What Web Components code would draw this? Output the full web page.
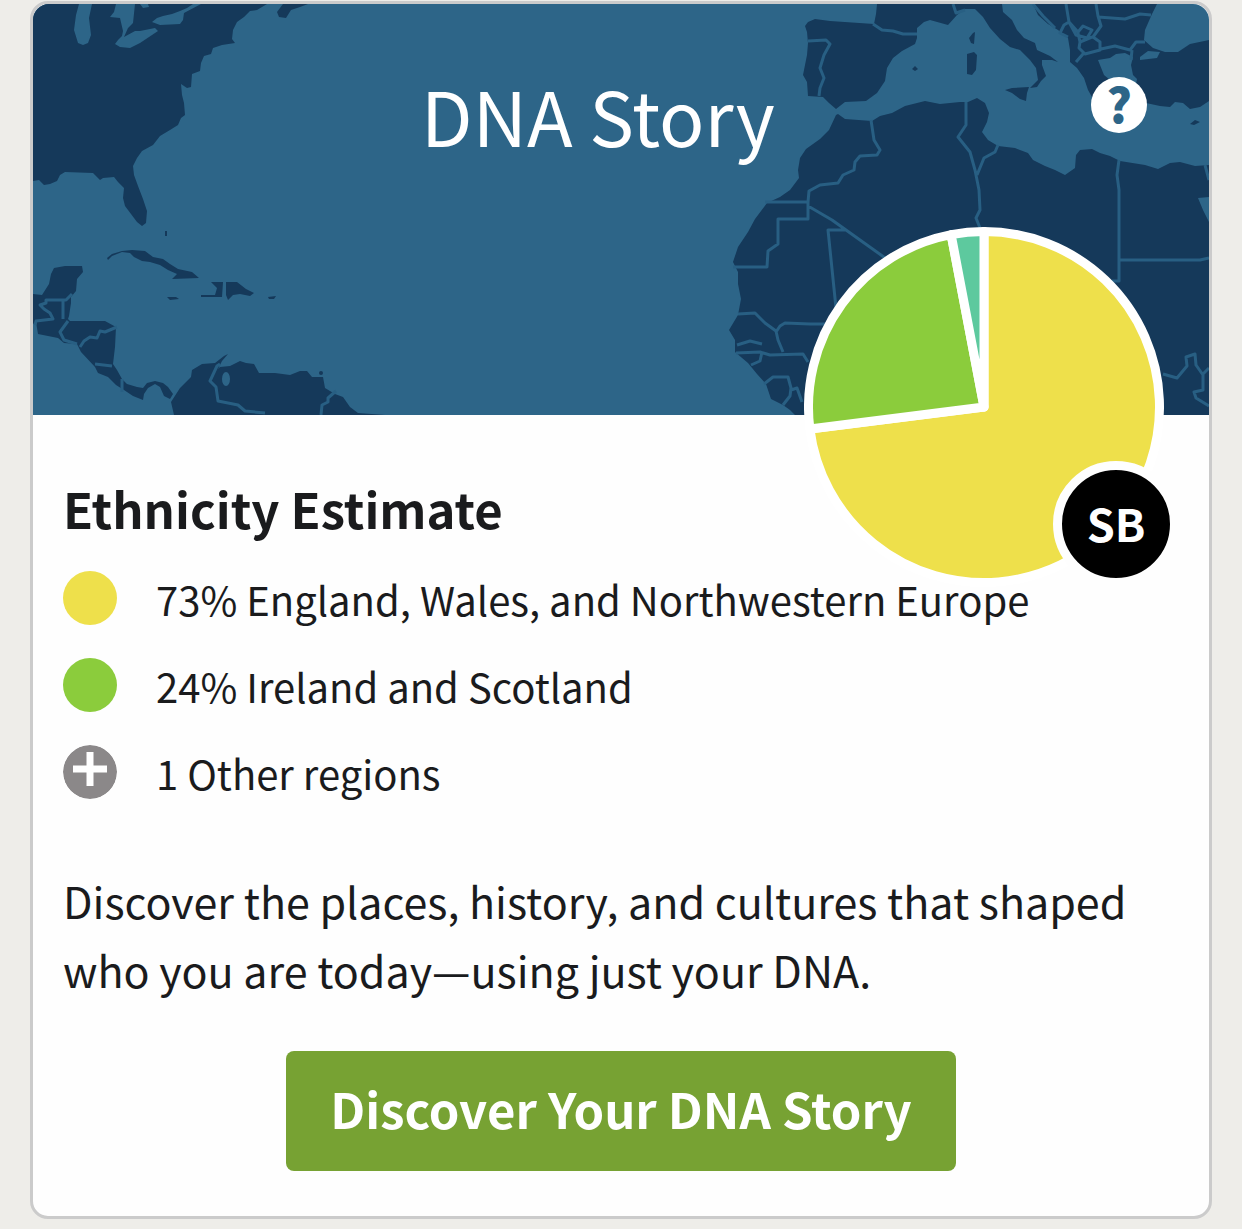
<!DOCTYPE html>
<html lang="en">
<head>
<meta charset="utf-8">
<meta name="viewport" content="width=device-width, initial-scale=1">
<title>DNA Story</title>
<style>
  body {
    margin: 0;
    padding: 1px 30px 10px;
    background: #eeede9;
    color: #1a1b1d;
    font-family: "Noto Sans CJK SC", "Noto Sans CJK JP", "Noto Sans", sans-serif;
  }
</style>
</head>
<body>
<dna-card>
  <dna-hero slot="hero">
    <span slot="title">DNA Story</span>
    <dna-pie slot="chart" values="73,24,3" colors="#eee04b,#8bcc3c,#5dc99e">SB</dna-pie>
  </dna-hero>
  <span slot="heading">Ethnicity Estimate</span>
  <dna-region color="#eee04b">73% England, Wales, and Northwestern Europe</dna-region>
  <dna-region color="#8bcc3c">24% Ireland and Scotland</dna-region>
  <dna-region color="#8b8889" more>1 Other regions</dna-region>
  <span slot="text">Discover the places, history, and cultures that shaped who you are today—using just your DNA.</span>
  <dna-button slot="action">Discover Your DNA Story</dna-button>
</dna-card>

<template id="map-template">
  <style>
    :host { display: block; overflow: hidden; background: #2d6588; }
    svg { display: block; width: 100%; height: 100%; }
    .land { fill: #15395a; }
    .water { fill: #2d6588; }
    .border { fill: none; stroke: #285f83; stroke-width: 3; stroke-linejoin: round; }
  </style>
  <svg viewBox="33 4 1176 411" preserveAspectRatio="xMidYMid slice" aria-hidden="true">
    <!-- north america -->
    <path class="land" d="M33 4H267L257 10 250 11 244 17 237 22 233 30 232 39 235 43 222 45 213 48 211 54 204 56 201 63 200 71 192 74 191 87 187 88 181 84 182 95 184 103 185 115 181 118 178 125 170 130 160 136 153 145 142 151 137 158 133 166 134 175 138 186 143 199 147 211 146 223 142 226 137 222 131 214 125 206 123 198 124 188 118 182 114 177 103 178 100 180 93 173 65 172 60 175 57 181 50 184 44 185 39 180 33 181Z"/>
    <path class="land" d="M283 4 277 12 279 17 286 18 291 10 300 7 308 4Z"/>
    <path class="water" d="M79 4 76 15 74 30 78 43 83 45 88 43 91 35 89 18 92 4Z
      M116 4 114 12 110 17 120 18 123 31 122 36 118 40 115 44 120 47 130 48 140 43 158 31 155 28 140 31 135 31 124 37 128 28 133 23 135 4Z
      M152 22 157 18 163 16 172 14 180 11 187 8 193 4H201L184 13 183 20 180 24 160 25Z
      M140 4 143 8 149 7 148 4Z"/>
    <!-- caribbean -->
    <path class="land" d="M107 258 112 254 122 251 132 250 145 251 153 257 163 259 170 264 178 269 192 272 199 278 172 279 177 274 168 270 160 265 150 262 142 261 134 257 130 253 122 252 112 256 108 260Z
      M167 297H176L179 299 170 300Z
      M211 282H223L222 297H201V295H215L217 288Z
      M226 282H237L246 289 254 293 250 296 240 294 233 295 228 300 226 295Z
      M268 297 276 296 274 299 269 299Z
      M165 231H167V236H165Z"/>
    <!-- central america -->
    <path class="land" d="M33 294 42 295 49 284 51 274 54 268 65 266H82L83 272 77 279 76 291 71 297 71 303 69 316 68 319 70 321H105L116 327 115 347 113 364 117 370 122 379 127 384 137 387 143 388 147 383 155 381 163 383 168 387 173 394 170 399 164 396 160 387 155 384 148 388 144 394 143 400 133 396 124 390 116 385 108 377 98 373 95 367 81 352 77 344 64 343 58 338 38 334 36 322 33 324Z"/>
    <path class="border" d="M35 325 36 321 53 319 50 313 44 309 40 305 46 303V300H66L72 294
      M63 301V319 M68 321 60 332 64 340 77 344 M80 347 84 341 90 337 97 338 100 331 105 332 117 327
      M95 364 112 366 M122 379V392"/>
    <!-- south america -->
    <path class="land" d="M174 415 171 402 180 388 191 377 192 370 202 364 215 363 224 356 228 354 222 361 218 369 220 367 230 366 240 361 246 363 254 364 259 373H275L290 375 300 371H307L312 377 323 377 325 388 335 394 343 397 350 407 358 413 385 415Z"/>
    <ellipse class="water" cx="226" cy="379" rx="4" ry="7"/>
    <path class="border" d="M220 364 217 366 210 381 216 387 218 401 238 405 245 411 265 413 M336 391 328 398V402L322 405 321 415"/>
    <circle class="land" cx="321" cy="373" r="2"/>
    <!-- europe -->
    <path class="land" d="M877 4 876 14 874 24 830 21 815 19 808 22 805 26 807 32 808 43 807 55 803 75 807 82 808 96 823 97 829 103 836 109 845 102 866 101 877 93 885 81 887 68 893 58 902 51 915 44 917 38 917 28 924 22 930 20 948 25 957 15 965 9 975 9 983 17 990 28 1000 39 1010 47 1020 50 1030 60 1036 68 1038 80 1030 88 1037 87 1041 81 1046 76 1042 65V60L1052 60 1058 62 1050 56 1037 50 1035 43 1024 38 1017 30 1012 20 1003 12 1002 4H1033L1038 15 1048 24 1058 30 1068 38 1070 50V62L1077 68 1084 78 1088 90 1092 97 1110 100 1110 80 1104 75 1098 60 1110 58 1116 54 1125 53 1133 57 1131 65 1133 75 1137 79 1135 90 1146 103 1160 106 1170 107 1175 102 1183 103 1190 109 1200 107 1209 101V40L1190 44 1178 52 1165 52 1153 48 1144 40 1145 30 1152 14 1157 4Z
      M1005 90 1012 88 1029 87 1027 93 1026 101 1020 99 1012 93Z
      M973 33 975 32 974 44 971 43 969 38Z M967 54 974 52 977 55 976 70 972 75 967 74Z
      M912 69 915 66 918 69 915 71Z M1190 124 1195 120 1200 122 1194 125Z"/>
    <path class="water" d="M1140 57 1148 51 1160 52 1157 58 1140 60Z"/>
    <path class="border" d="M873 24 882 30 893 31 903 34 917 34 M808 41 826 40 830 44 824 55 820 68 824 78 820 88 819 96 M953 4 956 13 965 10
      M1033 4 1043 16 1055 28 M1066 4 1069 22 1064 25 1060 33 1068 37 M1069 22 1078 32 1083 26 1092 30 1087 38 1076 35Z
      M1096 4 1098 16 1101 26 1093 37 1100 42V50L1085 54 1079 48 1080 42 1092 37 M1098 17 1125 19 1140 14 1151 15
      M1101 49 1115 46 1130 50 1136 42 1145 42 M1132 50 1131 60 M1083 54 1076 62 M1078 33 1080 42"/>
    <!-- africa -->
    <path class="land" d="M836 115 829 130 820 139 806 149 800 158 798 170 799 178 790 190 780 197 767 203 755 219 748 232 738 247 733 262 738 272V284L741 299 738 315 729 330 735 340V352L748 363 757 374 766 384 771 399 783 405 790 410 795 415H1209V222L1203 210 1198 198 1209 197V165L1195 166 1180 162 1170 163 1158 169 1145 165 1120 161 1110 156 1100 153 1092 149 1080 150 1076 155 1075 168 1065 175 1055 170 1045 166 1033 160 1028 153 1015 148 998 146 988 140 982 132 987 122 989 113 985 103 977 98 968 102 960 102 940 104 925 101 905 106 892 113 880 116 872 121 845 119 838 114Z"/>
    <path class="border" d="M871 120 874 140 880 150 877 155 860 156 855 162 854 170 843 175 838 183 820 185 809 191 808 202H765
      M808 202V219H778V244L768 251 767 267H733 M808 206 832 220 888 260 M845 230H828L836 308
      M826 324H810L785 323 780 326 776 332 M738 314 755 313 765 323 776 331 778 340 783 352
      M737 345 750 341 762 344 M736 353 760 352 770 355 803 354 808 362 M762 352 760 361 751 365
      M764 384 773 377H788L791 388 790 396 783 405 M791 390 797 388 802 402
      M966 102V125L958 137 970 152 975 170 979 190 980 210 976 218 980 228 M977 175 984 158 995 152 998 145
      M1119 160 1117 175 1119 190V281H1112 M1119 260H1200L1209 258
      M1163 374 1177 378 1187 366 1186 357 1195 354 1196 365 1203 375V390L1194 392 1196 398 1209 406 M1203 374 1209 368 M1205 165 1209 180"/>
  </svg>
</template>

<template id="hero-template">
  <style>
    :host { display: block; position: relative; }
    dna-map { height: 411px; border-radius: 16px 16px 0 0; }
    /* title bar and chart lie over the map */
    header {
      position: absolute;
      inset: 0 0 auto;
      display: grid;
      grid-template-columns: 1fr 56px;
      padding: 73px 62px 0 72px;
    }
    h1 { margin: 0; font-size: 75px; font-weight: 400; line-height: 76px; text-align: center; color: #fff; }
    button {
      width: 56px;
      height: 56px;
      padding: 0 0 6px;
      border: 0;
      border-radius: 50%;
      background: #fff;
      color: #2d6588;
      font: 900 48px/50px "Noto Sans CJK SC", "Noto Sans", sans-serif;
      cursor: pointer;
    }
    slot[name="chart"] { display: block; position: absolute; right: 45px; bottom: -172px; }
  </style>
  <dna-map></dna-map>
  <header>
    <h1><slot name="title"></slot></h1>
    <button type="button">?</button>
  </header>
  <slot name="chart"></slot>
</template>

<template id="pie-template">
  <style>
    :host { display: block; position: relative; width: 360px; height: 360px; }
    svg { display: block; width: 100%; height: 100%; }
    .slice { stroke: #fff; stroke-width: 9; stroke-linejoin: round; }
    .badge {
      position: absolute;
      right: -15px;
      bottom: 0;
      width: 108px;
      height: 108px;
      border: 9px solid #fefefe;
      border-radius: 50%;
      background: #000;
      color: #fff;
      font-size: 45px;
      font-weight: 700;
      line-height: 106px;
      text-align: center;
    }
  </style>
  <svg viewBox="-180 -180 360 360" aria-hidden="true"></svg>
  <div class="badge"><slot></slot></div>
</template>

<template id="region-template">
  <style>
    :host { display: flex; gap: 39px; max-height: 54px; font-size: 40px; line-height: 56px; }
    .dot { flex: none; width: 54px; height: 54px; border-radius: 50%; }
    svg { display: block; }
    button { display: contents; color: inherit; font: inherit; text-align: left; cursor: pointer; }
  </style>
</template>

<template id="button-template">
  <style>
    :host { display: block; }
    button {
      display: block;
      margin: 0 auto;
      padding: 0 44px 6px;
      border: 0;
      border-radius: 8px;
      background: #77a233;
      color: #fff;
      font: 700 49px/114px "Noto Sans CJK SC", "Noto Sans", sans-serif;
      cursor: pointer;
    }
  </style>
  <button type="button"><slot></slot></button>
</template>

<template id="card-template">
  <style>
    :host {
      display: block;
      border: 3px solid #cbcbcb;
      border-radius: 18px;
      background: #fefefe;
    }
    .body { padding: 63px 30px 45px; }
    h2 { margin: 0 0 33px; font-size: 49px; font-weight: 700; line-height: 60px; }
    .regions { display: grid; gap: 33px; }
    p { margin: 67px 0 47px; font-size: 43px; line-height: 69px; }
  </style>
  <slot name="hero"></slot>
  <div class="body">
    <h2><slot name="heading"></slot></h2>
    <div class="regions"><slot></slot></div>
    <p><slot name="text"></slot></p>
    <slot name="action"></slot>
  </div>
</template>

<script>
  class BaseElement extends HTMLElement {
    constructor() {
      super();
      this.attachShadow({ mode: "open" });
    }

    connectedCallback() {
      const template = document.getElementById(this.constructor.template);
      this.shadowRoot.replaceChildren(template.content.cloneNode(true));
      this.render();
    }

    render() {}
  }

  class DnaMap extends BaseElement {
    static template = "map-template";
  }

  class DnaHero extends BaseElement {
    static template = "hero-template";
  }

  class DnaCard extends BaseElement {
    static template = "card-template";
  }

  class DnaButton extends BaseElement {
    static template = "button-template";
  }

  class DnaPie extends BaseElement {
    static template = "pie-template";

    // slices run clockwise from the top
    render() {
      const values = this.getAttribute("values").split(",").map(Number);
      const colors = this.getAttribute("colors").split(",");
      const radius = 175.5;
      const point = (share) => {
        const angle = (share / 100) * Math.PI * 2;
        return `${radius * Math.sin(angle)} ${-radius * Math.cos(angle)}`;
      };
      let start = 0;
      let markup = "";
      values.forEach((value, i) => {
        const end = start + value;
        const large = value > 50 ? 1 : 0;
        markup += `<path class="slice" fill="${colors[i]}" d="M0 0L${point(start)}A${radius} ${radius} 0 ${large} 1 ${point(end)}Z"/>`;
        start = end;
      });
      this.shadowRoot.querySelector("svg").innerHTML = markup;
    }
  }

  class DnaRegion extends BaseElement {
    static template = "region-template";

    render() {
      const color = this.getAttribute("color");
      const row = document.createElement("template");
      if (this.hasAttribute("more")) {
        row.innerHTML = `
          <button type="button">
            <svg class="dot" viewBox="0 0 54 54" aria-hidden="true">
              <circle cx="27" cy="27" r="27" fill="${color}"/>
              <path d="M27 7v34M10 24h34" stroke="#fff" stroke-width="7"/>
            </svg>
            <span><slot></slot></span>
          </button>`;
      } else {
        row.innerHTML = `<span class="dot" style="background: ${color}"></span><span><slot></slot></span>`;
      }
      this.shadowRoot.append(row.content);
    }
  }

  customElements.define("dna-map", DnaMap);
  customElements.define("dna-hero", DnaHero);
  customElements.define("dna-pie", DnaPie);
  customElements.define("dna-region", DnaRegion);
  customElements.define("dna-button", DnaButton);
  customElements.define("dna-card", DnaCard);
</script>
</body>
</html>
